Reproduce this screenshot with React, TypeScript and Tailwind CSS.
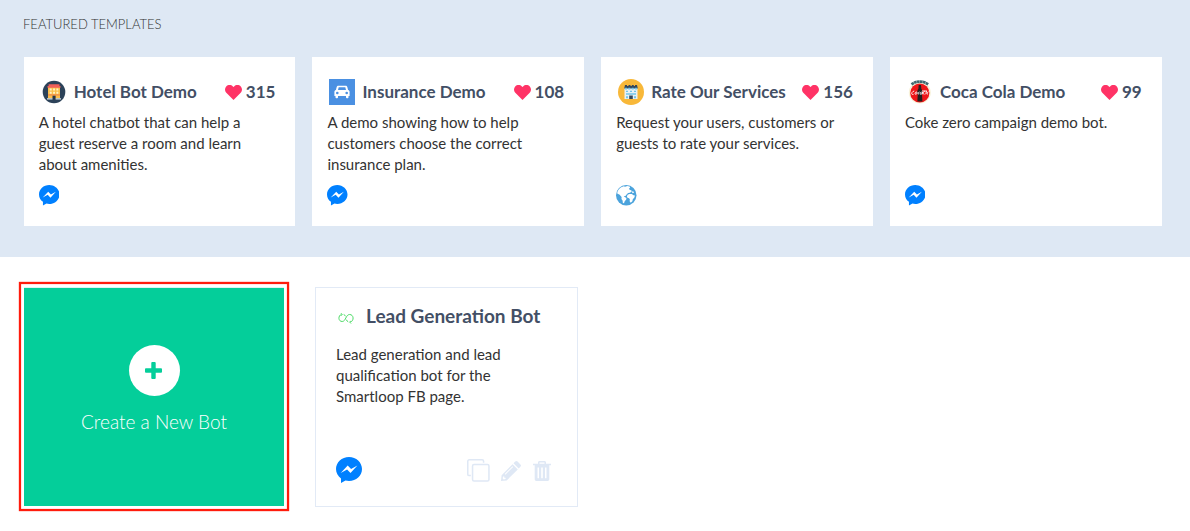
import React from "react";

function Messenger({ className }: { className: string }) {
  return (
    <svg className={className} viewBox="0 0 26 26">
      <path
        fill="#0080ff"
        d="M13 0C5.800 0 0 5.400 0 12.100c0 3.800 1.900 7.100 5 9.300V26l4.500-2.400c1.100.3 2.300.5 3.500.5 7.200 0 13-5.400 13-12S20.200 0 13 0z"
      />
      <path fill="#fff" d="M11.700 8.500 4.700 16l6.400-3.500 3.400 3.600 6.900-7.600-6.300 3.600z" />
    </svg>
  );
}

function Globe({ className }: { className: string }) {
  return (
    <svg className={className} viewBox="0 0 20 20">
      <circle cx="10" cy="10" r="10" fill="#4ba3dc" />
      <path
        fill="#fff"
        d="M1.200 8.200C1.300 5 4 2.200 7.600 1.200l1.200.5 2.300-.8 2.200.6.500 1.300-1.200.8 1 1.200 1.400.2.200 1.500-1.800 1-1.600.2-1.500 1.600-.8 1.300-1.500.4-.6 1.200.8.5-.6.5-1.600-.9-1.200-1.400-1.200-1.500z"
      />
      <path fill="#fff" d="m5.600 11.300 2.500.1 2.100 1.200-.3 1.700-1.300 1.400-.8 2.200-1.100-.4-.3-2.300-1.100-1.600z" />
      <path
        fill="#fff"
        d="m11.300 9.600 1.800-.9 2.300.2 1.700 1 1.400.3-.6 2-1.500 1.700-.4 1.900-1.700 1.400-1-1.300.2-1.900-.8-1.100-1.500-.5-.6-1.300zM15.200 6.700l1.500-.5.900 1.100-1.200.7z"
      />
    </svg>
  );
}

function Heart() {
  return (
    <svg className="h-[15px] w-[17px]" viewBox="0 0 17 15">
      <path
        fill="#ff3366"
        d="M8.500 15 1.300 7.800C-.4 6.100-.4 3.200 1.200 1.500 3-.4 6.100-.4 7.900 1.400l.6.7.6-.7c1.800-1.800 4.900-1.800 6.700.1 1.600 1.700 1.600 4.600-.1 6.300z"
      />
    </svg>
  );
}

function HotelIcon() {
  return (
    <svg className="size-[26px]" viewBox="0 0 26 26">
      <circle cx="13" cy="13" r="11.300" fill="#2c4259" />
      <path fill="#fbbf4b" d="M7 7.500h12v11.800H7z" />
      <path fill="#f0605a" d="M7.600 5.300h10.900v2H7.600zM6.500 7h13v1.700h-13z" />
      <path fill="#fff2c4" d="M8.800 9.500h1.900v2H8.800zm3.300 0h1.900v2h-1.900zm3.300 0h1.900v2h-1.900zM8.800 12.800h1.900v2H8.800zm3.300 0h1.900v2h-1.900zm3.300 0h1.900v2h-1.900z" />
      <path fill="#f28149" d="M7 15.400h12v1.100H7z" />
      <path fill="#25354a" d="M11.500 16.700h3.100v3.600h-3.100z" />
      <path fill="#d9e3e8" d="M6 19.300h5.500v1.200H6zm8.600 0H20v1.200h-5.400z" />
    </svg>
  );
}

function CarIcon() {
  return (
    <svg className="size-[26px]" viewBox="0 0 26 26">
      <path fill="#4a90e2" d="M0 0h26v26H0z" />
      <path
        fill="#fff"
        fillRule="evenodd"
        d="M9.500 6.700h7c1 0 1.500.4 1.800 1.300l.8 3c1 .3 1.500.9 1.500 2v4h-1.100v1.200c0 1.400-2.500 1.400-2.500 0V17H9v1.200c0 1.400-2.500 1.400-2.500 0V17H5.400v-4c0-1.100.5-1.700 1.500-2l.8-3c.3-.9.800-1.300 1.800-1.300zm.2 1.600L9 11h8l-.7-2.700zM8.300 12.700a1.300 1.300 0 1 0 0 2.600 1.300 1.300 0 0 0 0-2.600zm9.400 0a1.300 1.300 0 1 0 0 2.600 1.300 1.300 0 0 0 0-2.600z"
      />
    </svg>
  );
}

function StoreIcon() {
  return (
    <svg className="size-[26px]" viewBox="0 0 26 26">
      <circle cx="13" cy="13" r="13" fill="#f8b839" />
      <path fill="#e8f1f4" d="M6.500 9h13v11h-13z" />
      <path fill="#34485c" d="M7 6h2v1h1.500V6h2v1h1.300V6h2v1H17V6h2l.8 3.600H6.200z" />
      <path fill="#70c5e8" d="M7 8.800h2v1.700H7zm3.300 0h2v1.700h-2zm3.400 0h2v1.700h-2zm3.300 0h2v1.700h-2zM8 11.800h2V13H8zm4 0h2V13h-2zm4 0h2V13h-2zM8 14.200h10v1.500H8zM8 17.200h2v2H8zm8 0h2v2h-2z" />
      <path fill="#34485c" d="M11.200 16.500h3.600V20h-3.600z" />
    </svg>
  );
}

function ColaIcon() {
  return (
    <svg className="size-[26px]" viewBox="0 0 26 26">
      <circle cx="12.800" cy="13.500" r="11" fill="#f8f2da" />
      <circle cx="12.800" cy="14" r="9.600" fill="#ee1719" />
      <path fill="none" stroke="#3f6870" strokeWidth="2.800" strokeDasharray="2.700 .3" d="M4.500 5.300c5-3.600 11.600-3.600 16.600 0" />
      <path fill="#25201f" d="M11.700 6h2.300l.3 3.800c1.400 1.300 1.200 3.700.7 5.700l.4 6.900h-5l.3-6.900c-.6-2-.6-4.400.7-5.700z" />
      <path
        fill="none"
        stroke="#fff"
        strokeWidth=".9"
        d="M7.200 12c-2.900.6-3.400 4.200-.7 3.400M9.500 13c-1.700.2-1.900 2.500-.6 2.300 1.300-.1 1.600-2.300.6-2.300M12.500 13c-1.500.2-1.800 2.400-.4 2.300M14.500 13c-1.500.2-1.800 2.500-.6 2.300.9 0 1.400-1.200 1.600-2.300l-.3 2.300M17.900 12c-1.800.5-2.100 3.700-.5 3.300M19.500 12l-.7 3.300M21.500 12.800c-1.500.2-1.800 2.600-.5 2.500M15 12h5"
      />
    </svg>
  );
}

type Template = {
  title: string;
  likes: number;
  text: string;
  icon: React.ReactNode;
  web?: boolean;
};

const templates: Template[] = [
  { title: "Hotel Bot Demo", likes: 315, text: "A hotel chatbot that can help a guest reserve a room and learn about amenities.", icon: <HotelIcon /> },
  { title: "Insurance Demo", likes: 108, text: "A demo showing how to help customers choose the correct insurance plan.", icon: <CarIcon /> },
  { title: "Rate Our Services", likes: 156, text: "Request your users, customers or guests to rate your services.", icon: <StoreIcon />, web: true },
  { title: "Coca Cola Demo", likes: 99, text: "Coke zero campaign demo bot.", icon: <ColaIcon /> },
];

function TemplateCard({ title, likes, text, icon, web }: Template) {
  return (
    <article className="flex flex-col bg-white pt-[22px] pr-5 pb-[18px] pl-[15px]">
      <header className="flex h-[26px] items-center pl-[2px] text-[17px] font-bold text-[#434f65]">
        {icon}
        <h2 className="ml-[7px] whitespace-nowrap">{title}</h2>
        <span className="ml-auto flex items-center gap-1">
          <Heart />
          {likes}
        </span>
      </header>
      <p className="mt-[7px] h-[63px] w-[222px] text-[15px] leading-[21px] text-[#333]">{text}</p>
      <div className="mt-[10px]">
        {web ? <Globe className="size-[20.500px]" /> : <Messenger className="size-[20.500px]" />}
      </div>
    </article>
  );
}

function Actions() {
  return (
    <div className="flex items-center pt-[2px] text-[#dfe8f5]">
      <svg className="h-[23px] w-[23px]" viewBox="0 0 24 24" fill="none" stroke="currentColor" strokeWidth="1.600">
        <path d="M4 17.300H2.300a1.500 1.500 0 0 1-1.500-1.500V2.300A1.500 1.500 0 0 1 2.300.8h13.500a1.500 1.500 0 0 1 1.500 1.500V4" />
        <rect x="5.800" y="5.800" width="17.100" height="17.100" rx="1.500" />
      </svg>
      <svg className="ml-[11px] h-5 w-5" viewBox="0 0 20 20" fill="currentColor">
        <path fillRule="evenodd" d="M11.600 3.200 16.800 8.400 5.700 19.400 0 20l.6-5.700zM2 15.500l-.3 2 .9.900 2-.3v-1.400H3.300v-1.300zM11.500 5.300l-7.800 7.800.6.600 7.800-7.800z" />
        <path d="m12.500 2.300 1.700-1.700c.8-.8 1.600-.8 2.400 0l2.800 2.800c.8.800.8 1.600 0 2.400l-1.700 1.700z" />
      </svg>
      <svg className="ml-[12px] h-5 w-[18px]" viewBox="0 0 18 20" fill="currentColor">
        <path fillRule="evenodd" d="M5 2.800V1.500C5 .6 5.600 0 6.500 0h5c.9 0 1.500.6 1.500 1.500v1.300h5v1.500h-1.700v14c0 1-.7 1.700-1.700 1.700H3.400c-1 0-1.700-.7-1.700-1.700v-14H0V2.800zm1.500 0h5V1.500h-5zM4.500 6.500v10.800H6V6.500zm3.700 0v10.800h1.600V6.500zm3.800 0v10.800h1.500V6.500z" />
      </svg>
    </div>
  );
}

export default function App() {
  return (
    <div className="h-[531px] w-[1190px] overflow-hidden bg-white font-['Lato',sans-serif]">
      <section className="h-[257px] bg-[#dee8f4] pt-[14px]">
        <h1 className="ml-[23px] text-[13px] leading-5 font-light text-[#333]">FEATURED TEMPLATES</h1>
        <div className="mt-[23px] mr-[28.400px] ml-[23.700px] grid h-[169px] grid-cols-4 gap-[17px]">
          {templates.map((t) => (
            <TemplateCard key={t.title} {...t} />
          ))}
        </div>
      </section>
      <section className="flex items-start pt-[25px] pl-[19px]">
        <div className="h-[229px] w-[270px] border-[2px] border-[#ff1c0c] p-[3px] shadow-[0_0_1px_#ff1c0c,inset_0_0_1px_#ff1c0c]">
          <button className="flex h-full w-full flex-col items-center border-t border-[#dff5ef] bg-[#04ce9a] pt-[57px]">
            <span className="flex size-[51px] items-center justify-center rounded-full bg-white pr-px">
              <svg className="size-[17px]" viewBox="0 0 17 17">
                <path fill="#04ce9a" d="M7.200 0h2.600q.9 0 .9.900v5.400h5.400q.9 0 .9.900v2.600q0 .9-.9.900h-5.400v5.400q0 .9-.9.900H7.200q-.9 0-.9-.9v-5.400H.9q-.9 0-.9-.9V7.200q0-.9.9-.9h5.400V.9q0-.9.9-.9z" />
              </svg>
            </span>
            <span className="mt-[14px] text-[19px] leading-6 font-light text-white">Create a New Bot</span>
          </button>
        </div>
        <article className="mt-[5px] ml-[26px] h-[220px] w-[263px] border border-[#e2eaf6] px-5 pt-[15px]">
          <header className="flex h-[27px] items-center">
            <svg className="mt-[3px] ml-[2px] h-[11px] w-4" viewBox="0 0 16 11" fill="none" stroke="#4ddb67" strokeWidth="1">
              <path d="M3.600 1.300C-.2 2.600.1 8.500 4.200 8.500c3.700 0 3.500-7 7.400-7 4.300 0 4.700 6.400.8 7.600M3 .2l1.200 1.300L3 2.800M12.800 7.800l-1.100 1.300 1.300 1.400M5.700 1.500c1 .4 1.500 1 1.900 1.800M8.200 6.600c.5 1.100 1.100 1.800 2 2.200" />
            </svg>
            <h2 className="ml-[12px] whitespace-nowrap text-[19px] font-bold text-[#434f65]">Lead Generation Bot</h2>
          </header>
          <p className="mt-[14px] w-[180px] text-[15px] leading-[21px] text-[#333]">
            Lead generation and lead qualification bot for the Smartloop FB page.
          </p>
          <footer className="mt-[49.500px] flex items-center justify-between pr-[6px]">
            <Messenger className="size-[26px]" />
            <Actions />
          </footer>
        </article>
      </section>
    </div>
  );
}
